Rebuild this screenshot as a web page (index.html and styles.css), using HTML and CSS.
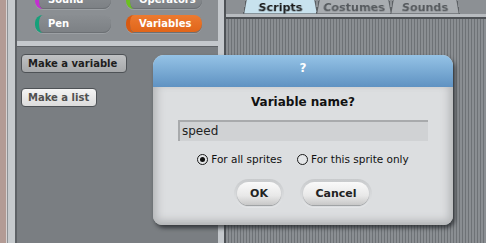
FILE: index.html
```html
<!DOCTYPE html>
<html lang="en">
<head>
  <meta charset="UTF-8" />
  <title>Scratch – variable</title>
  <link rel="stylesheet" href="styles.css">
</head>
<body>
  <div class="app">
    <div class="edge"></div>
    <div class="frame"></div>

    <div class="palette">
      <div class="categories">
        <div class="cat sound">Sound</div>
        <div class="cat operators">Operators</div>
        <div class="cat pen">Pen</div>
        <div class="cat variables">Variables</div>
      </div>
      <div class="hdivider"></div>
      <div class="blocks">
        <div class="make make-var">Make a variable</div>
        <div class="make make-list">Make a list</div>
      </div>
    </div>

    <div class="vdivider"></div>

    <div class="scripts">
      <div class="tabs">
        <div class="tab active scripts-tab">Scripts</div>
        <div class="tab costumes-tab">Costumes</div>
        <div class="tab sounds-tab">Sounds</div>
      </div>
      <div class="tabline"></div>
      <div class="canvas"></div>
    </div>

    <div class="dialog">
      <div class="dialog-title">?</div>
      <div class="dialog-body">
        <div class="question">Variable name?</div>
        <div class="field">speed</div>
        <div class="radios">
          <div class="radio checked"><span class="dot"></span>For all sprites</div>
          <div class="radio"><span class="dot"></span>For this sprite only</div>
        </div>
        <div class="buttons">
          <div class="btn ok"><span>OK</span></div>
          <div class="btn cancel"><span>Cancel</span></div>
        </div>
      </div>
    </div>
  </div>
</body>
</html>
```

FILE: styles.css
```css
body {
  margin: 0;
  padding: 0;
  overflow: hidden;
  font-family: 'DejaVu Sans', 'Verdana', sans-serif;
}

.app {
  position: relative;
  display: flex;
  width: 486px;
  height: 243px;
  background: #7b7f83;
}

.edge {
  width: 6px;
  background: #b39b95;
  border-right: 1px solid #d6d2d2;
}

.frame {
  width: 7px;
  background: #c6cacd;
  border-left: 1px solid #8e9296;
  border-right: 2px solid #5e6266;
}

.palette {
  width: 201px;
  display: flex;
  flex-direction: column;
}

.categories {
  height: 41px;
  background: #8b8f93;
  box-sizing: border-box;
  padding: 0 16px 8px 18px;
  display: grid;
  grid-template-columns: 76px 76px;
  column-gap: 15px;
  row-gap: 6px;
  align-content: end;
  overflow: hidden;
}

.cat {
  height: 18px;
  box-sizing: border-box;
  border-radius: 8px;
  background: linear-gradient(#8a8e92, #7c8084);
  box-shadow: inset 0 -1px 0 #6c7074, 0 1px 0 #9ca0a4;
  color: #fff;
  font-size: 10px;
  font-weight: bold;
  line-height: 18px;
  padding-left: 9px;
  border-left: 4px solid #888;
}

.sound { border-left-color: #c330d0; }
.operators { border-left-color: #6cc020; }
.pen { border-left-color: #16a07a; }
.variables {
  border-left-color: #d85a12;
  background: linear-gradient(#ec7a30, #e06418);
}

.hdivider {
  height: 5px;
  background: #c4c8cc;
  border-bottom: 1px solid #5e6266;
}

.blocks {
  flex: 1;
  background: #7a7e82;
  padding: 7px 0 0 4px;
  display: flex;
  flex-direction: column;
  align-items: flex-start;
  gap: 15px;
}

.make {
  height: 19px;
  box-sizing: border-box;
  border: 1px solid #4e5256;
  border-radius: 4px;
  padding: 0 6px;
  font-size: 10px;
  font-weight: bold;
  line-height: 17px;
  color: #1e1e1e;
}

.make-var {
  width: 106px;
  background: linear-gradient(#c0c2c4, #a6a8aa);
}

.make-list {
  width: 76px;
  background: linear-gradient(#f4f4f4, #dcdcdc);
  color: #505050;
}

.vdivider {
  width: 6px;
  background: #c4c8cc;
  border-right: 2px solid #4e5256;
}

.scripts {
  flex: 1;
  display: flex;
  flex-direction: column;
}

.tabs {
  height: 14px;
  background: #8c9094;
  display: flex;
  padding-left: 19px;
  gap: 2px;
  overflow: hidden;
}

.tab {
  margin-top: -6px;
  height: 20px;
  box-sizing: border-box;
  background: #a9adb1;
  border: 1px solid #5c6064;
  border-radius: 6px 6px 0 0;
  transform: perspective(20px) rotateX(6deg);
  font-size: 11px;
  font-weight: bold;
  color: #55595d;
  text-align: center;
  line-height: 25px;
}

.scripts-tab { width: 71px; }
.costumes-tab { width: 72px; }
.sounds-tab { width: 66px; }

.tab.active {
  background: #c8e2ee;
  color: #1a1a1a;
}

.tabline {
  height: 3px;
  background: #b8bcc0;
  border-bottom: 2px solid #4e5256;
}

.canvas {
  flex: 1;
  background: repeating-linear-gradient(90deg, #8a8e92 0 2px, #6e7276 2px 3px);
}

.dialog {
  position: absolute;
  left: 153px;
  top: 55px;
  width: 300px;
  height: 170px;
  border-radius: 11px 11px 9px 9px;
  background: #dcdee0;
  box-shadow: 2px 3px 4px rgba(30, 32, 36, 0.75);
  display: flex;
  flex-direction: column;
  overflow: hidden;
}

.dialog-title {
  height: 32px;
  background: linear-gradient(#95c3e6, #5f92c2);
  color: #fff;
  font-size: 12px;
  font-weight: bold;
  text-align: center;
  line-height: 26px;
}

.dialog-body {
  flex: 1;
  display: flex;
  flex-direction: column;
  align-items: center;
  box-shadow: inset 8px 0 8px -4px #b6b8ba, inset -8px 0 8px -4px #b6b8ba, inset 0 -8px 8px -4px #b0b2b4;
}

.question {
  margin-top: 7px;
  font-size: 12px;
  font-weight: bold;
  color: #111;
  height: 17px;
  line-height: 17px;
}

.field {
  margin-top: 9px;
  width: 250px;
  height: 21px;
  box-sizing: border-box;
  background: #d0d2d4;
  border-top: 2px solid #a8aaac;
  border-left: 2px solid #a8aaac;
  padding-left: 2px;
  font-size: 12px;
  line-height: 19px;
  color: #222;
}

.radios {
  margin-top: 12px;
  display: flex;
  gap: 15px;
  font-size: 10.5px;
  color: #111;
  height: 12px;
  line-height: 12px;
}

.radio {
  display: flex;
  align-items: center;
  gap: 3px;
}

.dot {
  width: 9px;
  height: 9px;
  border: 1px solid #1a1a1a;
  border-radius: 50%;
  background: #e4e6e8;
  position: relative;
}

.radio.checked .dot::after {
  content: '';
  position: absolute;
  left: 2px;
  top: 2px;
  width: 5px;
  height: 5px;
  border-radius: 50%;
  background: #111;
}

.buttons {
  margin-top: 14px;
  display: flex;
  gap: 16px;
}

.btn {
  height: 29px;
  box-sizing: border-box;
  padding: 3px;
  border-radius: 15px;
  background: linear-gradient(#c8cacc, #e4e6e8);
}

.btn span {
  display: block;
  height: 23px;
  border-radius: 12px;
  background: linear-gradient(#fafafa, #e8e8e8 60%, #c8c8c8);
  box-shadow: 0 1px 1px #9a9c9e;
  font-size: 11px;
  font-weight: bold;
  color: #222;
  text-align: center;
  line-height: 23px;
}

.ok { width: 50px; }
.cancel { width: 72px; }
```
